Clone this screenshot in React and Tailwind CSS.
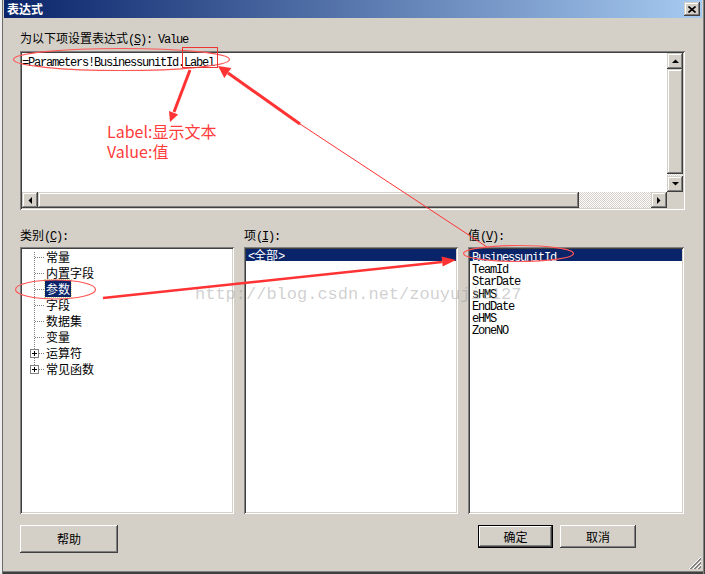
import React from "react";

const CJK = "font-['Noto_Sans_CJK_SC',sans-serif]";
const MONO = "font-['Liberation_Mono',monospace]";
const raised =
  "shadow-[inset_-1px_-1px_0_#404040,inset_1px_1px_0_#ffffff,inset_-2px_-2px_0_#808080,inset_2px_2px_0_#d4d0c8]";
const sunken =
  "shadow-[inset_1px_1px_0_#808080,inset_-1px_-1px_0_#ffffff,inset_2px_2px_0_#404040,inset_-2px_-2px_0_#d4d0c8]";
const sbBtn =
  "shadow-[inset_-1px_-1px_0_#404040,inset_1px_1px_0_#d4d0c8,inset_-2px_-2px_0_#808080,inset_2px_2px_0_#ffffff]";
const checker =
  "bg-[repeating-conic-gradient(#d4d0c8_0_25%,#ffffff_0_50%)] bg-[length:2px_2px]";

function M({ children, className = "" }) {
  return (
    <span className={`${MONO} text-[12px] tracking-[-1.2px] ${className}`}>
      {children}
    </span>
  );
}

function Tri({ dir }) {
  const pts = {
    up: "0,4 7,4 3.5,0.5",
    down: "0,0 7,0 3.5,3.5",
    left: "4,0 4,7 0.5,3.5",
    right: "0,0 0,7 3.5,3.5",
  }[dir];
  const vert = dir === "up" || dir === "down";
  return (
    <svg width={vert ? 7 : 4} height={vert ? 4 : 7} viewBox={vert ? "0 0 7 4" : "0 0 4 7"}>
      <polygon points={pts} fill="#000" />
    </svg>
  );
}

function SbButton({ dir, className = "" }) {
  return (
    <div className={`w-[16px] h-[16px] bg-[#d4d0c8] ${sbBtn} flex items-center justify-center shrink-0 ${className}`}>
      <Tri dir={dir} />
    </div>
  );
}

function ExpressionBox() {
  return (
    <div className={`mt-[6px] w-[665px] h-[159px] bg-white ${sunken} p-[2px] flex flex-col`}>
      <div className="flex flex-1 min-h-0">
        <div className="flex-1 leading-[12px] pt-[1px] text-black">
          <M>=Parameters!BusinessunitId.Label</M>
        </div>
        <div className="w-[16px] flex flex-col">
          <SbButton dir="up" />
          <div className={`flex-1 bg-[#d4d0c8] ${sbBtn}`} />
          <div className={`h-[2px] ${checker}`} />
          <SbButton dir="down" />
        </div>
      </div>
      <div className="flex h-[16px]">
        <SbButton dir="left" />
        <div className={`flex-1 bg-[#d4d0c8] ${sbBtn}`} />
        <div className={`w-[72px] ${checker}`} />
        <SbButton dir="right" />
        <div className="w-[16px] bg-[#d4d0c8]" />
      </div>
    </div>
  );
}

function TreeLines() {
  const rows = [0, 1, 2, 3, 4, 5, 6, 7];
  return (
    <svg className="absolute left-0 top-0" width="40" height="140">
      <line x1="14.5" y1="5" x2="14.5" y2="122" stroke="#808080" strokeDasharray="1 1" />
      {rows.map((i) => (
        <line key={i} x1="15" y1={10.5 + 16 * i} x2="25" y2={10.5 + 16 * i} stroke="#808080" strokeDasharray="1 1" />
      ))}
      {[6, 7].map((i) => {
        const c = 10.5 + 16 * i;
        return (
          <g key={i}>
            <rect x="10.5" y={c - 4} width="8" height="8" fill="#fff" stroke="#808080" />
            <line x1="12" y1={c} x2="17" y2={c} stroke="#000" />
            <line x1="14.5" y1={c - 2.5} x2="14.5" y2={c + 2.5} stroke="#000" />
          </g>
        );
      })}
    </svg>
  );
}

function Label({ cjk, k }) {
  return (
    <div className="h-[14px] leading-[14px] text-[12px] text-black whitespace-nowrap">
      <span className={CJK}>{cjk}</span>
      <M>
        (<u>{k}</u>):
      </M>
    </div>
  );
}

export default function App() {
  const tree = ["常量", "内置字段", "参数", "字段", "数据集", "变量", "运算符", "常见函数"];
  const values = ["BusinessunitId", "TeamId", "StarDate", "sHMS", "EndDate", "eHMS", "ZoneNO"];
  return (
    <div className="relative w-[705px] h-[574px] flex overflow-hidden bg-[#d4d0c8]">
      <div className="w-[2px] h-full bg-[#efefef]" />
      <div className="relative w-[703px] h-full border-l border-[#6a6a6a] pl-[1px] pr-[3px] bg-[#d4d0c8] shadow-[inset_-1px_0_0_#404040,inset_-2px_0_0_#808080,inset_0_-2px_0_#404040,inset_0_-3px_0_#808080] flex flex-col">
        {/* Title bar */}
        <div className="h-[18px] bg-[linear-gradient(to_right,#0a246a,#a6caf0)] flex items-center pl-[3px] pr-[2px]">
          <span className={`${CJK} text-[12px] font-bold text-white leading-[14px]`}>表达式</span>
          <div className={`ml-auto w-[16px] h-[14px] bg-[#d4d0c8] ${sbBtn} flex items-center justify-center`}>
            <svg width="8" height="7" viewBox="0 0 8 7">
              <path d="M0.5 0.5 L7.5 6.5 M7.5 0.5 L0.5 6.5" stroke="#000" strokeWidth="1.6" />
            </svg>
          </div>
        </div>

        {/* Body */}
        <div className="pl-[16px] flex flex-col">
          <div className="mt-[13px] h-[14px] leading-[14px] text-[12px] text-black whitespace-nowrap">
            <span className={CJK}>为以下项设置表达式</span>
            <M>
              (<u>S</u>): Value
            </M>
          </div>

          <ExpressionBox />

          <div className="mt-[18px] flex gap-[10px]">
            {/* Category */}
            <div className="w-[214px] flex flex-col">
              <Label cjk="类别" k="C" />
              <div className={`relative mt-[5px] h-[267px] bg-white ${sunken} p-[2px]`}>
                <TreeLines />
                <div className={`${CJK} text-[12px] text-black`}>
                  {tree.map((t) => (
                    <div key={t} className="h-[16px] leading-[16px] pl-[23px]">
                      {t === "参数" ? (
                        <span className="bg-[#0a246a] text-white px-[1px] outline-1 outline-dotted outline-[#d8d890]">
                          {t}
                        </span>
                      ) : (
                        <span className="px-[1px]">{t}</span>
                      )}
                    </div>
                  ))}
                </div>
              </div>
            </div>

            {/* Items */}
            <div className="w-[214px] flex flex-col">
              <Label cjk="项" k="I" />
              <div className={`mt-[5px] h-[267px] bg-white ${sunken} p-[2px]`}>
                <div className="h-[12px] leading-[12px] bg-[#0a246a] text-white pl-[2px] text-[12px] whitespace-nowrap">
                  <M>&lt;</M>
                  <span className={CJK}>全部</span>
                  <M>&gt;</M>
                </div>
              </div>
            </div>

            {/* Values */}
            <div className="w-[216px] flex flex-col">
              <Label cjk="值" k="V" />
              <div className={`mt-[5px] h-[267px] bg-white ${sunken} p-[2px]`}>
                {values.map((v, i) => (
                  <div
                    key={v}
                    className={`h-[12.2px] leading-[12px] pl-[2px] whitespace-nowrap ${i === 0 ? "bg-[#0a246a] text-white" : "text-black"}`}
                  >
                    <M>{v}</M>
                  </div>
                ))}
              </div>
            </div>
          </div>

          {/* Buttons */}
          <div className="mt-[11px] flex items-start">
            <button className={`w-[98px] h-[28px] bg-[#d4d0c8] ${raised} ${CJK} text-[12px] text-black leading-[14px]`}>
              帮助
            </button>
            <button className={`ml-[360px] w-[75px] h-[23px] border border-black bg-[#d4d0c8] ${raised} ${CJK} text-[12px] text-black leading-[14px]`}>
              确定
            </button>
            <button className={`ml-[7px] w-[76px] h-[23px] bg-[#d4d0c8] ${raised} ${CJK} text-[12px] text-black leading-[14px]`}>
              取消
            </button>
          </div>
        </div>

        {/* Resize grip */}
        <svg className="absolute right-[4px] bottom-[5px]" width="13" height="13" viewBox="0 0 13 13">
          {[0, 4, 8].map((o) => (
            <g key={o}>
              <line x1={13} y1={1 + o} x2={1 + o} y2={13} stroke="#ffffff" />
              <line x1={13} y1={2 + o} x2={2 + o} y2={13} stroke="#808080" />
              <line x1={13} y1={3 + o} x2={3 + o} y2={13} stroke="#808080" />
            </g>
          ))}
        </svg>
      </div>

      {/* Watermark */}
      <div className={`absolute left-[195px] top-[285px] ${MONO} text-[17px] leading-[20px] text-[rgba(150,150,150,0.45)] pointer-events-none whitespace-nowrap`}>
        http://blog.csdn.net/zouyujie127
      </div>

      {/* Red annotation text */}
      <div className={`absolute left-[107px] top-[121px] ${CJK} text-[16px] leading-[20px] text-[#ff3c3c] pointer-events-none`}>
        <div>Label:显示文本</div>
        <div>Value:值</div>
      </div>

      {/* Red annotation drawing */}
      <svg className="absolute left-0 top-0 pointer-events-none" width="705" height="574" viewBox="0 0 705 574">
        <ellipse cx="121.5" cy="59.5" rx="108" ry="11" fill="none" stroke="#f55" strokeWidth="1.2" />
        <rect x="182.5" y="47.5" width="35" height="20" fill="none" stroke="#e33" strokeWidth="1" />
        <line x1="190" y1="70" x2="174" y2="112" stroke="#f33" strokeWidth="3" />
        <polygon points="170,122 178.2,114.5 169,110.9" fill="#f33" />
        <line x1="300" y1="124" x2="228" y2="73" stroke="#f33" strokeWidth="3" />
        <polygon points="218,66 231.3,68.1 224.3,77.9" fill="#f33" />
        <line x1="300" y1="124" x2="487" y2="247" stroke="#f33" strokeWidth="1" />
        <line x1="103" y1="298" x2="442" y2="262" stroke="#f33" strokeWidth="2.5" />
        <polygon points="456,260 442.6,266.5 441.6,256.5" fill="#f33" />
        <ellipse cx="55.5" cy="289.5" rx="40" ry="9.5" fill="none" stroke="#f55" strokeWidth="1.2" />
        <ellipse cx="518.5" cy="253.5" rx="55" ry="8" fill="none" stroke="#f55" strokeWidth="1.2" />
      </svg>
    </div>
  );
}
